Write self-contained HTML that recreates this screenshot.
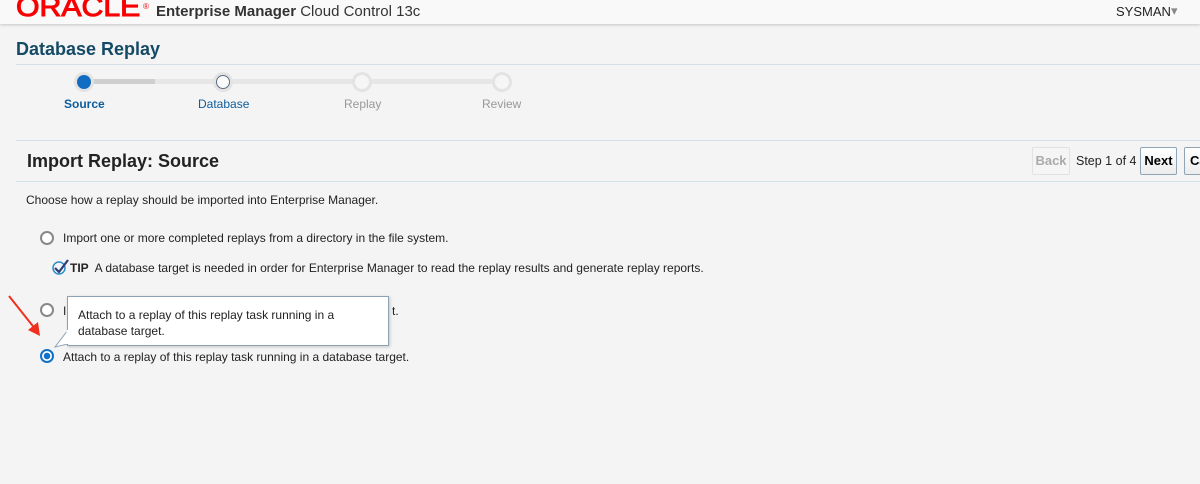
<!DOCTYPE html>
<html><head><style>
body{margin:0;width:1200px;height:484px;overflow:hidden;background:#f4f4f4;font-family:"Liberation Sans",sans-serif;position:relative;color:#333}
.a{position:absolute;white-space:nowrap}
.hdr{position:absolute;left:0;top:0;width:1200px;height:24px;background:#f9f9f9;box-shadow:0 1px 3px rgba(0,0,0,.2)}
.hl{position:absolute;height:1px;background:#d3e0e8;left:16px;right:0}
.c{position:absolute;width:14px;height:14px;border-radius:50%;box-sizing:border-box;box-shadow:0 0 0 3px #e3e3e3}
.rad{position:absolute;width:14px;height:14px;border-radius:50%;border:2px solid #888;box-sizing:border-box;background:#fff}
.btn{position:absolute;top:147px;height:28px;box-sizing:border-box;border:1px solid #8fa5b6;border-radius:2px;background:linear-gradient(#fff,#ececec);font-weight:bold;font-size:13px;line-height:26px;text-align:center;color:#000}
</style></head><body>
<div class="hdr"></div>
<div class="a" style="left:16px;top:-9px;font-size:28px;color:#f80000;transform:scaleX(1.08);transform-origin:left;-webkit-text-stroke:1px #f80000">ORACLE</div>
<div class="a" style="left:143px;top:2px;font-size:8px;color:#f80000">®</div>
<div class="a" style="left:156px;top:3px;font-size:15px;color:#333"><b>Enterprise Manager</b> Cloud Control 13c</div>
<div class="a" style="left:1116px;top:4px;font-size:13px;color:#222">SYSMAN</div>
<div class="a" style="left:1171px;top:3px;font-size:13px;color:#888">▾</div>
<div class="a" style="left:16px;top:39px;font-size:18px;font-weight:bold;color:#144a66">Database Replay</div>
<div class="hl" style="top:64px"></div>
<div class="a" style="left:84px;top:79px;width:418px;height:5px;background:#e6e6e6"></div>
<div class="a" style="left:84px;top:79px;width:71px;height:5px;background:#cfcfcf"></div>
<div class="c" style="left:77px;top:75px;background:#0f6cc0"></div>
<div class="c" style="left:216px;top:75px;background:#fbfbfb;border:1px solid #5a6e84"></div>
<div class="c" style="left:355px;top:75px;background:#f6f6f6"></div>
<div class="c" style="left:495px;top:75px;background:#f6f6f6"></div>
<div class="a" style="left:64px;top:97px;font-size:12px;font-weight:bold;color:#0e5c9b">Source</div>
<div class="a" style="left:198px;top:97px;font-size:12px;color:#0e5c9b">Database</div>
<div class="a" style="left:344px;top:97px;font-size:12px;color:#999">Replay</div>
<div class="a" style="left:482px;top:97px;font-size:12px;color:#999">Review</div>
<div class="hl" style="top:140px"></div>
<div class="a" style="left:27px;top:151px;font-size:18px;font-weight:bold;color:#222">Import Replay: Source</div>
<div class="hl" style="top:181px"></div>
<div class="btn" style="left:1032px;width:38px;color:#aaa;border-color:#e2e2e2;background:#f5f5f5">Back</div>
<div class="a" style="left:1076px;top:154px;font-size:12.5px;color:#222">Step 1 of 4</div>
<div class="btn" style="left:1140px;width:37px">Next</div>
<div class="btn" style="left:1184px;width:30px;text-align:left;padding-left:5px">Ca</div>
<div class="a" style="left:26px;top:193px;font-size:12px;color:#222">Choose how a replay should be imported into Enterprise Manager.</div>
<div class="rad" style="left:40px;top:231px"></div>
<div class="a" style="left:63px;top:231px;font-size:12px;color:#222">Import one or more completed replays from a directory in the file system.</div>
<svg class="a" style="left:52px;top:259px" width="18" height="16"><circle cx="7" cy="9" r="6" fill="none" stroke="#2c8ec9" stroke-width="1.5"/><path d="M3 9l4 4L16 1" fill="none" stroke="#2a3e7a" stroke-width="2.2"/></svg>
<div class="a" style="left:70px;top:261px;font-size:12px;color:#222"><b>TIP</b>&nbsp; A database target is needed in order for Enterprise Manager to read the replay results and generate replay reports.</div>
<div class="rad" style="left:40px;top:303px"></div>
<div class="a" style="left:63px;top:304px;font-size:12px;color:#222">I</div>
<div class="a" style="left:392px;top:304px;font-size:12px;color:#222">t.</div>
<div class="rad" style="left:40px;top:349px;border-color:#1170c9;background:radial-gradient(circle,#1170c9 3px,#fff 3.5px)"></div>
<div class="a" style="left:63px;top:350px;font-size:12px;color:#222">Attach to a replay of this replay task running in a database target.</div>
<div class="a" style="left:67px;top:296px;width:322px;height:50px;box-sizing:border-box;background:#fff;border:1px solid #8da3b5;box-shadow:1px 1px 3px rgba(0,0,0,.2);font-size:12px;line-height:16px;padding:10px 10px;white-space:normal;color:#222">Attach to a replay of this replay task running in a database target.</div>
<svg class="a" style="left:50px;top:330px" width="20" height="20"><path d="M18 0L5 17 18 14Z" fill="#fff" stroke="#8da3b5"/><path d="M17.5 0L17.5 14" stroke="#fff" stroke-width="2"/></svg>
<svg class="a" style="left:0;top:290px" width="50" height="55"><path d="M9 6L36 40" stroke="#f0301e" stroke-width="2"/><path d="M40 46L28 40 38 32Z" fill="#f0301e"/></svg>
</body></html>
